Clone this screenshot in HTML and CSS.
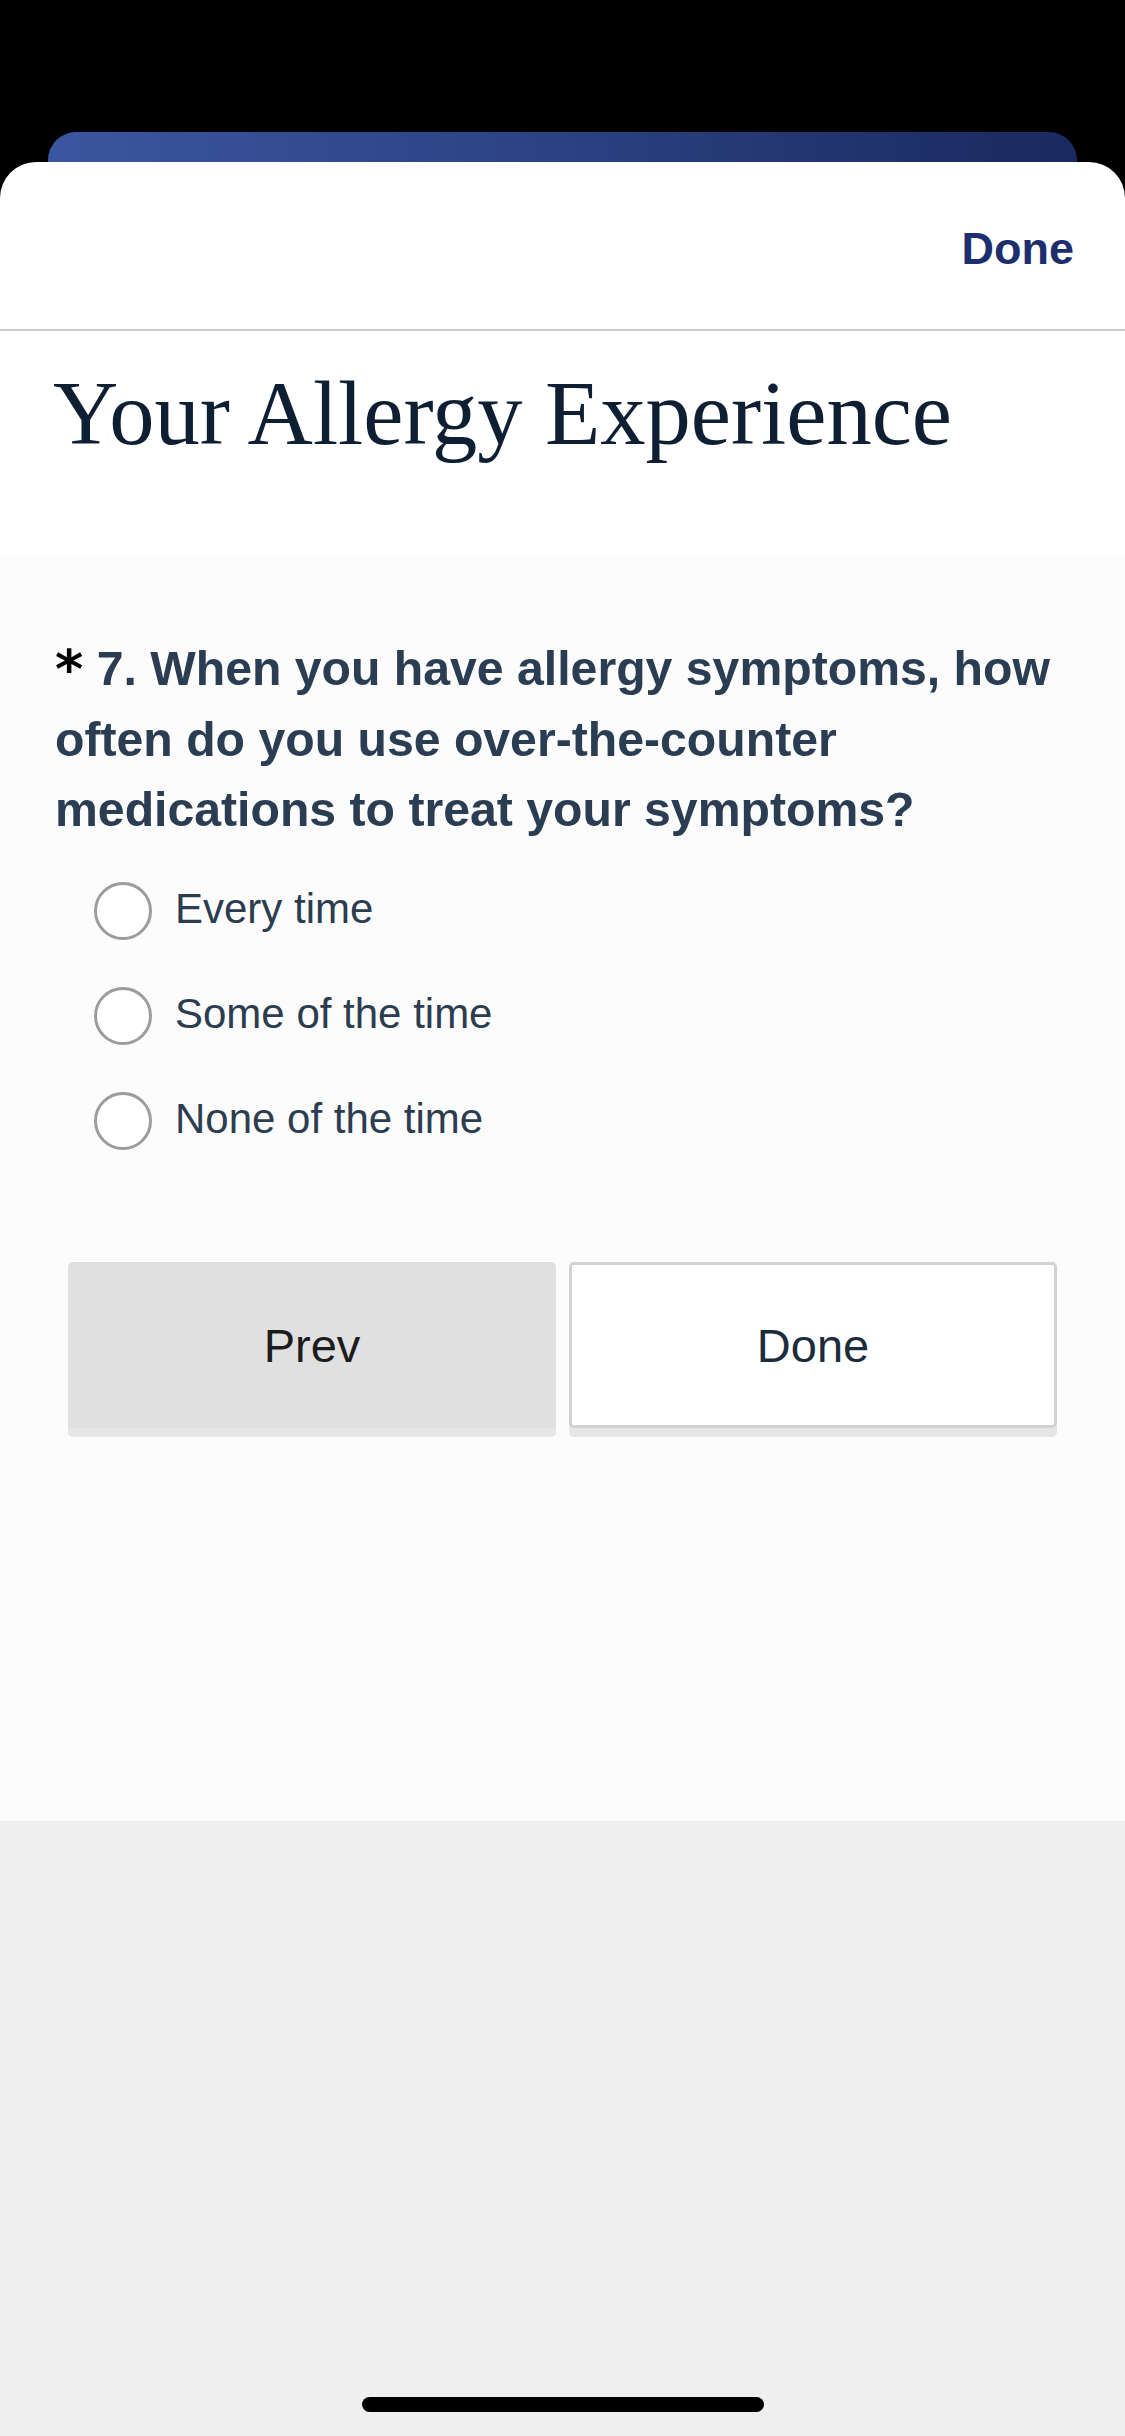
FILE: index.html
```html
<!DOCTYPE html>
<html lang="en">
<head>
<meta charset="utf-8">
<title>Your Allergy Experience</title>
<link rel="stylesheet" href="styles.css">
</head>
<body>
<div class="screen">
  <div class="status"></div>
  <div class="back-card"></div>
  <div class="sheet">
    <div class="nav">
      <span class="nav-done">Done</span>
    </div>
    <div class="title-wrap">
      <h1 class="title">Your Allergy Experience</h1>
    </div>
    <div class="content">
      <h2 class="question"><span class="req">*</span> 7. When you have allergy symptoms, how often do you use over-the-counter medications to treat your symptoms?</h2>
      <div class="options">
        <label class="option"><span class="radio"></span><span class="opt-text">Every time</span></label>
        <label class="option"><span class="radio"></span><span class="opt-text">Some of the time</span></label>
        <label class="option"><span class="radio"></span><span class="opt-text">None of the time</span></label>
      </div>
      <div class="buttons">
        <div class="btn btn-prev">Prev</div>
        <div class="btn btn-done">Done</div>
      </div>
    </div>
    <div class="footer">
      <div class="home-indicator"></div>
    </div>
  </div>
</div>
</body>
</html>
```

FILE: styles.css
```css
* {
  box-sizing: border-box;
}

html, body {
  margin: 0;
  padding: 0;
}

body {
  width: 1125px;
  height: 2436px;
  overflow: hidden;
  background: #000;
  font-family: "Liberation Sans", Arial, sans-serif;
}

.screen {
  width: 1125px;
  height: 2436px;
  display: flex;
  flex-direction: column;
  background: #000;
}

.status {
  height: 132px;
  flex: none;
}

.back-card {
  height: 30px;
  flex: none;
  margin: 0 48px 0 48px;
  border-radius: 28px 28px 0 0;
  background: linear-gradient(90deg, #3b56a0 0%, #2b4182 50%, #1a295e 100%);
}

.sheet {
  flex: 1;
  display: flex;
  flex-direction: column;
  background: #fff;
  border-radius: 36px 36px 0 0;
  overflow: hidden;
}

.nav {
  height: 169px;
  flex: none;
  padding: 64px 51px 0 0;
  display: flex;
  justify-content: flex-end;
  align-items: flex-start;
  border-bottom: 2px solid #cbcbcb;
}

.nav-done {
  font-size: 45px;
  line-height: 45px;
  font-weight: 700;
  color: #1d2e6e;
}

.title-wrap {
  height: 226px;
  flex: none;
  padding: 38px 0 0 53px;
  background: #fff;
}

.title {
  margin: 0;
  font-family: "Liberation Serif", "Times New Roman", serif;
  font-weight: 400;
  font-size: 90.5px;
  line-height: 89px;
  color: #0e1e33;
}

.content {
  height: 1264px;
  flex: none;
  background: #fcfcfc;
  padding-top: 76px;
}

.question {
  margin: 0;
  padding: 0 50px 0 55px;
  font-size: 48.2px;
  line-height: 70.5px;
  font-weight: 700;
  color: #2a3d53;
}

.req {
  font-family: "DejaVu Sans", sans-serif;
  font-size: 54px;
  line-height: 1;
  vertical-align: -3px;
  color: #000;
}

.options {
  margin-top: 14px;
  padding-left: 94px;
  display: flex;
  flex-direction: column;
}

.option {
  height: 105px;
  display: flex;
  align-items: center;
  gap: 23px;
}

.radio {
  width: 58px;
  height: 58px;
  flex: none;
  border: 3px solid #9c9c9c;
  border-radius: 50%;
  background: #fff;
}

.opt-text {
  font-size: 42px;
  line-height: 42px;
  padding-bottom: 4px;
  color: #2c3d50;
}

.buttons {
  margin-top: 88px;
  padding: 0 68px;
  display: grid;
  grid-template-columns: 1fr 1fr;
  gap: 13px;
}

.btn {
  height: 166px;
  display: flex;
  align-items: center;
  justify-content: center;
  padding-top: 2px;
  font-size: 47px;
  line-height: 47px;
  border-radius: 5px;
  box-shadow: 0 9px 0 #e6e6e6;
}

.btn-prev {
  background: #e0e0e0;
  color: #1c1c1c;
}

.btn-done {
  background: #fff;
  border: 3px solid #d2d2d2;
  color: #1d2c3c;
}

.footer {
  flex: 1;
  background: #efefef;
  display: flex;
  flex-direction: column;
  justify-content: flex-end;
  align-items: center;
  padding-bottom: 24px;
}

.home-indicator {
  width: 402px;
  height: 15px;
  border-radius: 8px;
  background: #000;
}
```
